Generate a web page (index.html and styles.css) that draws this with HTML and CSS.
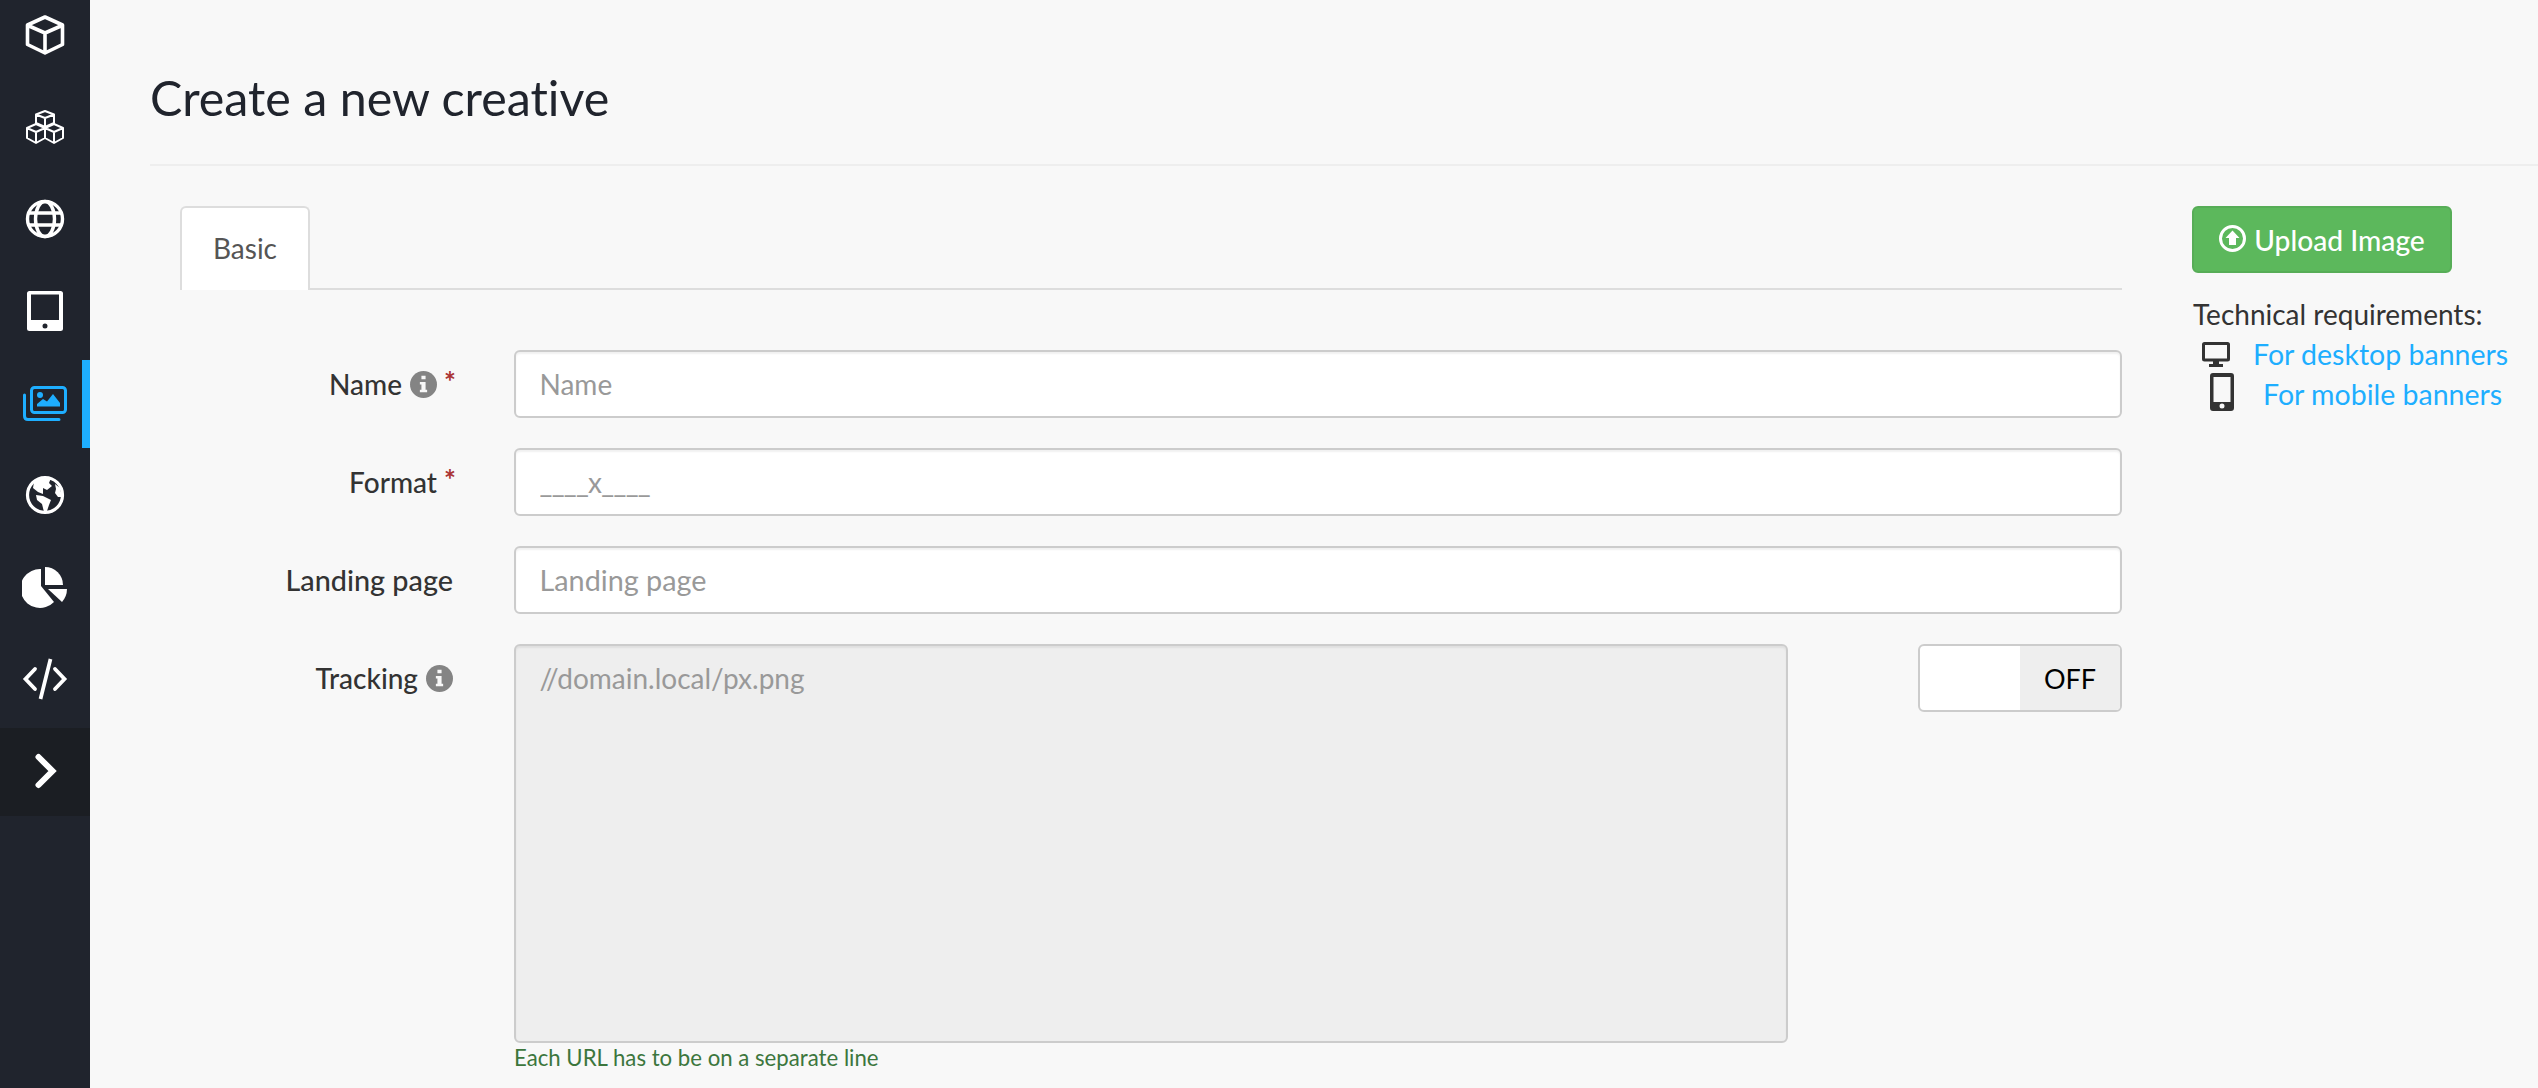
FILE: index.html
```html
<!DOCTYPE html>
<html lang="en">
<head>
<meta charset="utf-8">
<title>Create a new creative</title>
<link rel="stylesheet" href="styles.css">
</head>
<body>
<div class="app">
  <nav class="sidebar">
    <a class="nav-item"><svg class="ico" viewBox="0 0 40 40"><path d="M20 2 L37.500 10 V29.500 L20 38 L2.500 29.500 V10 Z M3 10.500 L20 18 L37 10.500 M20 18 V38" fill="none" stroke="#fff" stroke-width="3.600" stroke-linejoin="round"/></svg></a>
    <a class="nav-item"><svg class="ico" viewBox="0 0 40 40"><g fill="none" stroke="#fff" stroke-width="2" stroke-linejoin="round"><path d="M20 4 L29 7.500 V16 L20 20 L11 16 V7.500 Z M11 7.500 L20 11 L29 7.500 M20 11 V20"/><path d="M11 17 L20 21 V31 L11 36 L2 31 V21 Z M2 21 L11 25 L20 21 M11 25 V36"/><path d="M29 17 L38 21 V31 L29 36 L20 31 V21 Z M20 21 L29 25 L38 21 M29 25 V36"/></g></svg></a>
    <a class="nav-item"><svg class="ico" viewBox="0 0 40 40"><g fill="none" stroke="#fff" stroke-width="3.400"><circle cx="20" cy="20" r="17.500"/><ellipse cx="20" cy="20" rx="9.500" ry="17.500"/><path d="M3 14 H37 M3 26 H37"/></g></svg></a>
    <a class="nav-item"><svg class="ico" viewBox="0 0 40 40"><path fill-rule="evenodd" fill="#fff" d="M4.500 0 H35.500 Q38 0 38 2.500 V37.500 Q38 40 35.500 40 H4.500 Q2 40 2 37.500 V2.500 Q2 0 4.500 0 Z M6 3.500 V29 H34 V3.500 Z M20 32.500 A2.500 2.500 0 1 0 20 37.500 A2.500 2.500 0 1 0 20 32.500 Z"/></svg></a>
    <a class="nav-item active"><svg class="ico-img" viewBox="0 0 44 35"><g fill="none" stroke="#1eaeff" stroke-width="3" stroke-linejoin="round"><rect x="8.500" y="1.500" width="34" height="25" rx="3"/><path d="M1.500 9 V30 Q1.500 33.500 5 33.500 H36" stroke-linecap="round"/></g><g fill="#1eaeff"><circle cx="17" cy="9" r="3"/><path d="M14 20.500 V18 L20 13 L24 15.500 L30 8 L37 17 V20.500 Z"/></g></svg></a>
    <a class="nav-item"><svg class="ico" viewBox="0 0 40 40"><circle cx="20" cy="20" r="17.500" fill="none" stroke="#fff" stroke-width="3.200"/><path fill="#fff" d="M9 7 L16 2 L26 3 L24 8 L27 11 L22 15 L18 13 L18 19 L13 17 L8 13 Z M11 20 L18 21 L26 25 L24 30 L22 36 L19 37 L17 29 L12 25 Z M30 9 L35 13 L37 22 L33 22 L30 18 L31 14 Z"/></svg></a>
    <a class="nav-item"><svg class="ico-wide" viewBox="0 0 46 42"><g fill="#fff"><path d="M19 3 V20 L32 36 A19.500 19.500 0 1 1 19 3 Z"/><path d="M23 1 A18 18 0 0 1 41 19 H23 Z"/><path d="M26 23 H45 A20 20 0 0 1 40 36 Z"/></g></svg></a>
    <a class="nav-item"><svg class="ico-wide" viewBox="0 0 46 42"><path fill="none" stroke="#fff" stroke-width="3.800" stroke-linecap="round" d="M13 11 L3.500 21 L13 31 M33 11 L42.500 21 L33 31"/><path fill="none" stroke="#fff" stroke-width="3.800" d="M28.500 1 L18.500 41"/></svg></a>
    <a class="nav-item toggle-row"><svg class="ico" viewBox="0 0 40 40"><path fill="none" stroke="#fff" stroke-width="6" stroke-linecap="round" stroke-linejoin="miter" d="M13.500 6 L27.500 20 L13.500 34"/></svg></a>
  </nav>
  <main class="main">
    <header class="page-head"><h1 class="title">Create a new creative</h1></header>
    <div class="content">
      <section class="form-col">
        <div class="tabs"><span class="tab">Basic</span></div>
        <form class="form">
          <div class="row">
            <label class="lbl">Name<svg class="info" viewBox="0 0 26 26"><circle cx="13" cy="13" r="13" fill="#848484"/><path fill="#f8f8f8" d="M11 4.500 H15 V8 H11 Z M9.500 10.500 H15 V18 H16.500 V20.500 H9.500 V18 H11 V13 H9.500 Z"/></svg><span class="req">*</span></label>
            <input class="field" type="text" placeholder="Name">
          </div>
          <div class="row">
            <label class="lbl">Format<span class="req">*</span></label>
            <input class="field field-fmt" type="text" placeholder="____x____">
          </div>
          <div class="row">
            <label class="lbl lbl-wide">Landing page</label>
            <input class="field field-wide" type="text" placeholder="Landing page">
          </div>
          <div class="row">
            <label class="lbl">Tracking<svg class="info" viewBox="0 0 26 26"><circle cx="13" cy="13" r="13" fill="#848484"/><path fill="#f8f8f8" d="M11 4.500 H15 V8 H11 Z M9.500 10.500 H15 V18 H16.500 V20.500 H9.500 V18 H11 V13 H9.500 Z"/></svg></label>
            <div class="track">
              <div class="track-main">
                <textarea class="area" disabled placeholder="//domain.local/px.png"></textarea>
                <p class="help">Each URL has to be on a separate line</p>
              </div>
              <div class="switch"><span class="switch-knob"></span><span class="switch-off">OFF</span></div>
            </div>
          </div>
        </form>
      </section>
      <aside class="side">
        <button class="upload" type="button"><svg class="up-ico" viewBox="0 0 27 27"><circle cx="13.500" cy="13.500" r="12" fill="none" stroke="#fff" stroke-width="3"/><path fill="#fff" d="M13.500 5.500 L20.500 13 H17 V20 H10 V13 H6.500 Z"/></svg><span>Upload Image</span></button>
        <p class="tech">Technical requirements:</p>
        <div class="req-link"><svg class="dev-desk" viewBox="0 0 28 25"><path fill-rule="evenodd" fill="#333" d="M2.500 0 H25.500 Q28 0 28 2.500 V17 Q28 19.500 25.500 19.500 H17 V22 H21 V25 H7 V22 H11 V19.500 H2.500 Q0 19.500 0 17 V2.500 Q0 0 2.500 0 Z M3 3 V16.500 H25 V3 Z"/></svg><a class="lnk" href="#">For desktop banners</a></div>
        <div class="req-link req-mobile"><svg class="dev-mob" viewBox="0 0 24 38"><path fill-rule="evenodd" fill="#333" d="M3 0 H21 Q24 0 24 3 V35 Q24 38 21 38 H3 Q0 38 0 35 V3 Q0 0 3 0 Z M3.500 4 V29 H20.500 V4 Z M12 30.500 A2.500 2.500 0 1 0 12 35.500 A2.500 2.500 0 1 0 12 30.500 Z"/></svg><a class="lnk" href="#">For mobile banners</a></div>
      </aside>
    </div>
  </main>
</div>
</body>
</html>
```
FILE: styles.css
```css
* { box-sizing: border-box; }
html, body { margin: 0; height: 100%; overflow: hidden; }
body {
  font-family: "Lato", "Liberation Sans", sans-serif;
  font-variant-ligatures: none;
  background: #f8f8f8;
  color: #333;
}
.app { display: flex; height: 1088px; }
.sidebar {
  width: 90px;
  flex: none;
  background: #20242d;
  overflow: hidden;
}
.nav-item {
  display: flex;
  align-items: center;
  justify-content: center;
  height: 88px;
  margin-bottom: 4px;
  padding-bottom: 2px;
}
.nav-item:first-child { margin-top: -8px; }
.nav-item.active { border-right: 8px solid #1eaeff; padding-left: 8px; }
.toggle-row { background: #1b1e23; }
.ico { width: 40px; height: 40px; display: block; }
.ico-wide { width: 46px; height: 42px; display: block; }
.ico-img { width: 44px; height: 35px; display: block; }
.main { flex: 1; min-width: 0; }
.page-head {
  margin-left: 60px;
  height: 166px;
  border-bottom: 2px solid #eeeeee;
  padding-top: 66px;
}
.title {
  margin: 0;
  font-size: 48.4px;
  line-height: 62px;
  font-weight: 400;
  color: #20242d;
}
.content { display: flex; padding: 40px 0 0 90px; }
.form-col { width: 1942px; flex: none; }
.tabs { height: 84px; border-bottom: 2px solid #dddddd; display: flex; }
.tab {
  width: 130px;
  height: 84px;
  background: #fff;
  border: 2px solid #dddddd;
  border-bottom: 0;
  border-radius: 6px 6px 0 0;
  font-size: 28px;
  color: #555;
  display: flex;
  align-items: center;
  justify-content: center;
  padding-bottom: 2px;
}
.form { padding-top: 60px; display: flex; flex-direction: column; gap: 30px; }
.row { display: grid; grid-template-columns: 273px 1fr; column-gap: 61px; align-items: start; }
.lbl {
  font-size: 28px;
  font-weight: 500;
  color: #333;
  height: 68px;
  display: flex;
  align-items: center;
  justify-content: flex-end;
  gap: 8px;
  white-space: nowrap;
}
.lbl-wide { font-size: 28.8px; }
.info { width: 27px; height: 27px; flex: none; }
.req { color: #a33; font-size: 28px; font-weight: 700; line-height: 1; margin: -6px -2px 0 -1px; width: 11px; }
.field, .area {
  font-family: inherit;
  font-size: 28px;
  color: #333;
  border: 2px solid #cccccc;
  border-radius: 6px;
  background: #fff;
  padding: 0 23.5px;
  width: 100%;
  display: block;
  outline: none;
  box-shadow: inset 0 2px 2px rgba(0,0,0,.06);
}
.field { height: 68px; }
.field-fmt { letter-spacing: -.7px; }
.field-wide { font-size: 28.8px; }
.field::placeholder, .area::placeholder { color: #999; opacity: 1; }
.track { display: flex; justify-content: space-between; align-items: flex-start; }
.track-main { width: 1274px; }
.area { height: 399px; background: #eeeeee; padding-top: 16px; resize: none; line-height: 32px; }
.help { margin: 2px 0 0; font-size: 22.2px; line-height: 26px; color: #3c763d; }
.switch {
  width: 204px;
  height: 68px;
  border: 2px solid #cccccc;
  border-radius: 6px;
  background: #fff;
  display: flex;
  overflow: hidden;
}
.switch-knob { width: 100px; }
.switch-off { flex: 1; background: #eeeeee; font-size: 27px; color: #000; display: flex; align-items: center; justify-content: center; }
.side { padding-left: 70px; }
.upload {
  width: 260px;
  height: 67px;
  background: #5cb85c;
  border: 2px solid #57ad57;
  border-radius: 6px;
  color: #fff;
  font-family: inherit;
  font-size: 28.2px;
  font-weight: 500;
  display: flex;
  align-items: center;
  justify-content: center;
  gap: 8px;
  padding: 0;
}
.up-ico { width: 27px; height: 27px; margin-top: -3px; }
.tech { margin: 24px 0 3px; font-size: 28px; line-height: 34px; color: #333; padding-left: 1px; }
.req-link { display: flex; align-items: center; height: 40px; padding-left: 10px; font-size: 28.5px; white-space: nowrap; }
.dev-desk { width: 28px; height: 25px; margin-right: 23px; }
.dev-mob { width: 24px; height: 38px; margin: 0 29px 4px 8px; }
.lnk { color: #1eaeff; text-decoration: none; }
```
